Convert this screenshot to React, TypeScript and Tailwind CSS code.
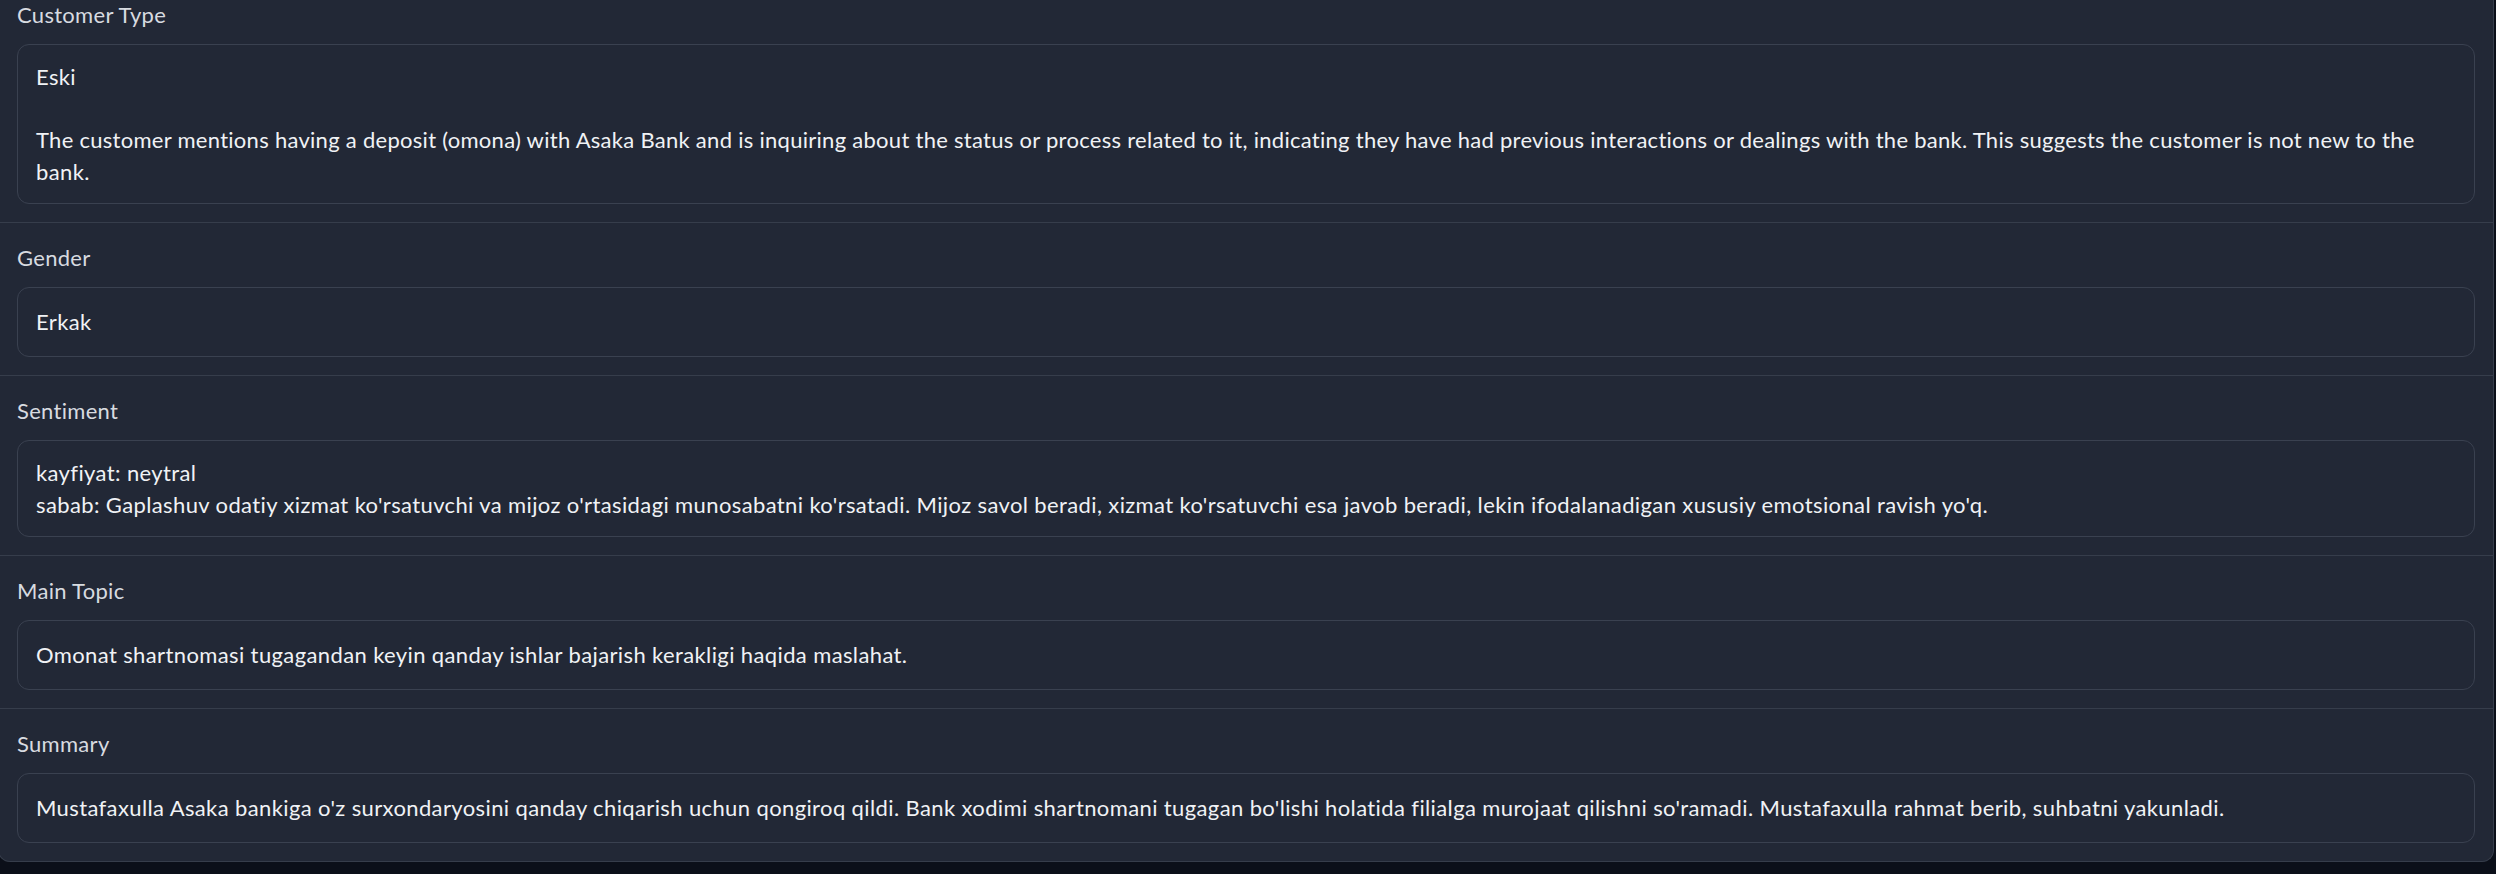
import React from "react";

const font = { fontFamily: "Lato, 'Noto Sans', sans-serif" };

function Section({
  label,
  children,
  first,
  last,
  single,
}: {
  label: string;
  children: React.ReactNode;
  first?: boolean;
  last?: boolean;
  single?: boolean;
}) {
  return (
    <div
      className={
        (first ? "pt-0" : "pt-[19px]") +
        " pb-[18px] px-[18px] " +
        (last ? "" : "border-b border-[#363d4b]")
      }
    >
      <div className={"text-[22px] tracking-[0.3px] leading-[32px] text-[#d8dbe0] " + (first ? "-mt-[1px]" : "")}>{label}</div>
      <div
        className={
          "mt-[13px] rounded-[12px] border border-[#3a4150] px-[18px] text-[22px] tracking-[0.38px] leading-[31.5px] text-[#f0f2f5] " +
          (single ? "h-[70px] flex items-center" : "py-[16px]")
        }
      >
        <div className="w-full">{children}</div>
      </div>
    </div>
  );
}

export default function App() {
  return (
    <div className="w-[2496px] h-[874px] bg-[#0b0f19] overflow-hidden" style={font}>
      <div className="ml-[-2px] w-[2496px] bg-[#222836] border border-[#363d4b] border-t-0 rounded-b-[12px]">
        <Section label="Customer Type" first>
          <div>Eski</div>
          <div className="h-[31.5px]" />
          <div className="whitespace-nowrap tracking-[0.28px]">
            The customer mentions having a deposit (omona) with Asaka Bank and is inquiring about the status or process related to it, indicating they have had previous interactions or dealings with the bank. This suggests the customer is not new to the
          </div>
          <div>bank.</div>
        </Section>
        <Section label="Gender" single>
          Erkak
        </Section>
        <Section label="Sentiment">
          <div>kayfiyat: neytral</div>
          <div className="whitespace-nowrap">
            sabab: Gaplashuv odatiy xizmat ko'rsatuvchi va mijoz o'rtasidagi munosabatni ko'rsatadi. Mijoz savol beradi, xizmat ko'rsatuvchi esa javob beradi, lekin ifodalanadigan xususiy emotsional ravish yo'q.
          </div>
        </Section>
        <Section label="Main Topic" single>
          Omonat shartnomasi tugagandan keyin qanday ishlar bajarish kerakligi haqida maslahat.
        </Section>
        <Section label="Summary" single last>
          Mustafaxulla Asaka bankiga o'z surxondaryosini qanday chiqarish uchun qongiroq qildi. Bank xodimi shartnomani tugagan bo'lishi holatida filialga murojaat qilishni so'ramadi. Mustafaxulla rahmat berib, suhbatni yakunladi.
        </Section>
      </div>
    </div>
  );
}
